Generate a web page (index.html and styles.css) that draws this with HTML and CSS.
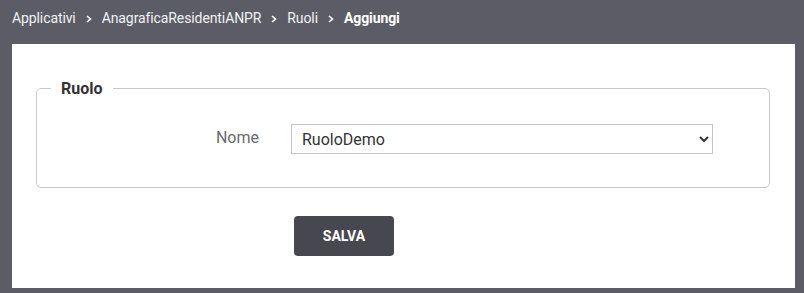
FILE: index.html
```html
<!DOCTYPE html>
<html lang="it">
<head>
<meta charset="utf-8">
<title>Aggiungi Ruolo</title>
<link rel="stylesheet" href="styles.css">
</head>
<body>
<nav class="crumbs">
  <span class="crumb">Applicativi</span>
  <svg class="sep" viewBox="0 0 6 8" width="6" height="8"><path d="M1 1 L4.5 4 L1 7" fill="none" stroke="#fff" stroke-width="1.6"/></svg>
  <span class="crumb">AnagraficaResidentiANPR</span>
  <svg class="sep" viewBox="0 0 6 8" width="6" height="8"><path d="M1 1 L4.5 4 L1 7" fill="none" stroke="#fff" stroke-width="1.6"/></svg>
  <span class="crumb">Ruoli</span>
  <svg class="sep" viewBox="0 0 6 8" width="6" height="8"><path d="M1 1 L4.5 4 L1 7" fill="none" stroke="#fff" stroke-width="1.6"/></svg>
  <span class="crumb current">Aggiungi</span>
</nav>
<main class="panel">
  <form class="form">
    <fieldset class="group">
      <legend class="legend">Ruolo</legend>
      <div class="row">
        <label class="label" for="nome">Nome</label>
        <select class="select" id="nome">
          <option>RuoloDemo</option>
        </select>
      </div>
    </fieldset>
    <div class="actions">
      <button type="button" class="btn">SALVA</button>
    </div>
  </form>
</main>
</body>
</html>
```
FILE: styles.css
```css
html, body {
  margin: 0;
  padding: 0;
}
body {
  background: #5c5c66;
  font-family: Roboto, "Liberation Sans", Arial, sans-serif;
  height: 293px;
  overflow: hidden;
}
.crumbs {
  height: 36px;
  display: flex;
  align-items: center;
  padding-left: 12px;
  gap: 9px;
  color: #f2f2f4;
  font-size: 14px;
  letter-spacing: -0.1px;
}
.crumb.current {
  font-weight: 700;
  color: #fff;
}
.sep {
  display: block;
  margin: 1px 1px 0;
}
.panel {
  background: #fff;
  margin: 8px 9px 0 12px;
  padding: 35px 25px 32px 24px;
}
.form {
  margin: 0;
}
.group {
  margin: 0;
  border: 1px solid #c9c9c9;
  border-radius: 5px;
  padding: 0 14px 33px 14px;
}
.legend {
  padding: 0 10px;
  font-size: 16px;
  font-weight: 700;
  line-height: 19px;
  color: #333;
}
.row {
  display: grid;
  grid-template-columns: 208px 422px;
  column-gap: 32px;
  align-items: center;
  padding-top: 26px;
}
.label {
  text-align: right;
  font-size: 16px;
  color: #6a6a6a;
  margin-top: -3px;
}
.select {
  height: 30px;
  width: 422px;
  border: 1px solid #c4c4c4;
  border-radius: 0;
  background: #fff;
  font-family: Roboto, "Liberation Sans", Arial, sans-serif;
  font-size: 16px;
  color: #333;
  padding: 0 6px;
  margin: 0;
}
.actions {
  padding-top: 28px;
  padding-left: 258px;
}
.btn {
  width: 100px;
  height: 40px;
  border: none;
  border-radius: 4px;
  background: #46474f;
  color: #fff;
  font-family: Roboto, "Liberation Sans", Arial, sans-serif;
  font-size: 14px;
  font-weight: 700;
  display: block;
}
```
